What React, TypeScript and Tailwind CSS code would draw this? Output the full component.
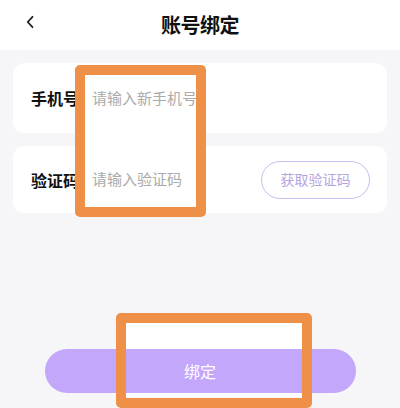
import React from 'react'

const font = { fontFamily: '"Noto Sans CJK SC", "Noto Sans", sans-serif' }

function BackIcon() {
  return (
    <svg width="10" height="14" viewBox="0 0 10 14" fill="none">
      <path d="M7.5 1.8 L2.7 7 L7.5 12.2" stroke="#222" strokeWidth="1.8" strokeLinecap="round" strokeLinejoin="round" />
    </svg>
  )
}

export default function App() {
  return (
    <div className="relative h-[408px] w-[400px] overflow-hidden bg-[#f6f6f8]" style={font}>
      {/* white fill behind the annotation boxes */}
      <div className="absolute left-[85px] top-[75px] h-[132px] w-[111px] bg-white" />
      <div className="absolute left-[126px] top-[323px] h-[74px] w-[176px] bg-white" />

      <div className="relative z-10 flex h-full flex-col">
        <header className="relative flex h-[50px] shrink-0 items-center justify-center bg-white">
          <button type="button" className="absolute left-[25px] top-[15px]">
            <BackIcon />
          </button>
          <h1 className="text-[20px] font-bold leading-none text-[#111] tracking-[-0.5px]">账号绑定</h1>
        </header>

        <main className="flex flex-col px-[13px] pt-[13px]">
          <div className="flex h-[70px] items-center rounded-xl bg-white pl-[18px]">
            <span className="w-[61px] text-[16px] font-bold text-[#111]">手机号</span>
            <span className="text-[15px] text-[#ababab]">请输入新手机号</span>
          </div>

          <div className="mt-[13px] flex h-[67px] items-center rounded-xl bg-white pl-[18px] pr-[17px]">
            <span className="w-[61px] text-[16px] font-bold text-[#111]">验证码</span>
            <span className="flex-1 text-[15px] text-[#ababab]">请输入验证码</span>
            <button
              type="button"
              className="flex h-[38px] w-[109px] items-center justify-center rounded-full border-[1.5px] border-[#cbbdf0] text-[14px] text-[#b6a3e2]"
            >
              获取验证码
            </button>
          </div>

          <button
            type="button"
            className="mx-auto mt-[136px] flex h-[44px] w-[311px] items-center justify-center rounded-full bg-[#c3a7fb] text-[16px] font-normal text-white"
          >
            绑定
          </button>
        </main>
      </div>

      {/* annotation boxes */}
      <div className="absolute left-[75px] top-[65px] z-20 h-[152px] w-[131px] rounded-[5px] border-[10px] border-[#ef9049]" />
      <div className="absolute left-[116px] top-[313px] z-20 h-[95px] w-[196px] rounded-[5px] border-[10px] border-[#ef9049]" />
    </div>
  )
}
